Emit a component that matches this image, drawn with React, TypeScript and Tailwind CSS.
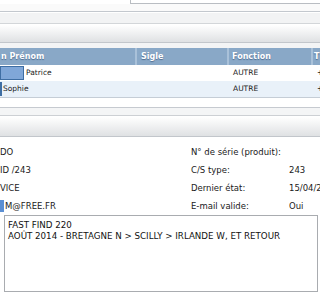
const rows = [
  { nom: true, prenom: 'Patrice', sigle: '', fonction: 'AUTRE', tel: '+', alt: false },
  { nom: false, prenom: 'Sophie', sigle: '', fonction: 'AUTRE', tel: '+', alt: true },
]

const fields = [
  { left: 'DO', label: 'N° de série (produit):', value: '' },
  { left: 'ID /243', label: 'C/S type:', value: '243' },
  { left: 'VICE', label: 'Dernier état:', value: '15/04/2014' },
  { left: 'M@FREE.FR', label: 'E-mail valide:', value: 'Oui', mark: true },
]

const Bar = ({ h }: { h: string }) => (
  <div className={`${h} border-t border-b border-t-white border-b-[#c2c6cb] bg-gradient-to-b from-white to-[#dfe1e3]`} />
)

export default function App() {
  return (
    <div className="w-[320px] h-[300px] overflow-hidden bg-[#f7f7f7] font-['DejaVu_Sans',sans-serif] text-[#1a1a1a]">
      {/* top strip */}
      <div className="flex h-[4px]">
        <div className="w-[130px] bg-white" />
        <div className="flex-1 bg-white border-l border-b border-[#b9bdc2]" />
      </div>
      <div className="h-[7px] bg-[#fafafa]" />
      <div className="h-px bg-[#c3c8ce]" />
      <div className="h-px bg-white" />
      <div className="h-[10px] bg-[#f2f3f4]" />
      <div className="h-px bg-[#d3d6d9]" />
      <Bar h="h-[19px]" />
      <div className="h-[5px] bg-[#f3f4f5]" />

      {/* grid */}
      <div className="grid grid-cols-[137px_92px_84px_1fr] h-[17px] bg-[#89a8c7] text-white font-bold text-[8px] leading-[17px] [text-shadow:0_1px_1px_rgba(40,70,110,0.6)]">
        <div className="pl-px border-r-2 border-[#a9c1d9] whitespace-nowrap overflow-hidden">n Prénom</div>
        <div className="pl-[4px] border-r-2 border-[#a9c1d9]">Sigle</div>
        <div className="pl-[3px] border-r-2 border-[#a9c1d9]">Fonction</div>
        <div className="pl-[1px]">T</div>
      </div>
      {rows.map((r) => (
        <div
          key={r.prenom}
          className={`grid grid-cols-[137px_92px_84px_1fr] h-[16px] text-[7.5px] leading-[16px] ${r.alt ? 'bg-[#e9f1f9]' : 'bg-white'}`}
        >
          <div className="flex items-center overflow-hidden">
            {r.nom ? (
              <div className="w-[24px] h-[14px] mr-[2px] bg-[#80a7d8] border border-[#3f6ea3]" />
            ) : (
              <div className="w-[2px] h-[14px] mr-[1px] bg-[#3f6ea3]" />
            )}
            <span>{r.prenom}</span>
          </div>
          <div>{r.sigle}</div>
          <div className="pl-[4px]">{r.fonction}</div>
          <div className="pl-[4px]">{r.tel}</div>
        </div>
      ))}
      <div className="h-px bg-[#c5cdd6]" />
      <div className="h-[9px] bg-white" />
      <div className="h-px bg-[#c6cad0]" />
      <div className="h-[7px] bg-[#f4f5f6]" />
      <div className="h-px bg-[#cdd0d4]" />
      <Bar h="h-[21px]" />

      {/* form */}
      <div className="bg-white pt-[6px]">
        {fields.map((f) => (
          <div key={f.label} className="grid grid-cols-[191px_98px_1fr] h-[18px] items-center text-[8.5px] whitespace-nowrap">
            <div className="flex items-center">
              {f.mark && <div className="w-[4px] h-[12px] mr-px bg-[#5b8fd3]" />}
              <span>{f.left}</span>
            </div>
            <div>{f.label}</div>
            <div className="overflow-hidden">{f.value}</div>
          </div>
        ))}
        <div className="px-[4px] pb-[8px] bg-white">
          <div className="h-[77px] w-[314px] border border-[#a9acb0] bg-white px-[3px] pt-[4px] text-[8.7px] leading-[11px] text-[#111]">
            <div>FAST FIND 220</div>
            <div>AOÛT 2014 - BRETAGNE N &gt; SCILLY &gt; IRLANDE W, ET RETOUR</div>
          </div>
        </div>
      </div>
    </div>
  )
}
